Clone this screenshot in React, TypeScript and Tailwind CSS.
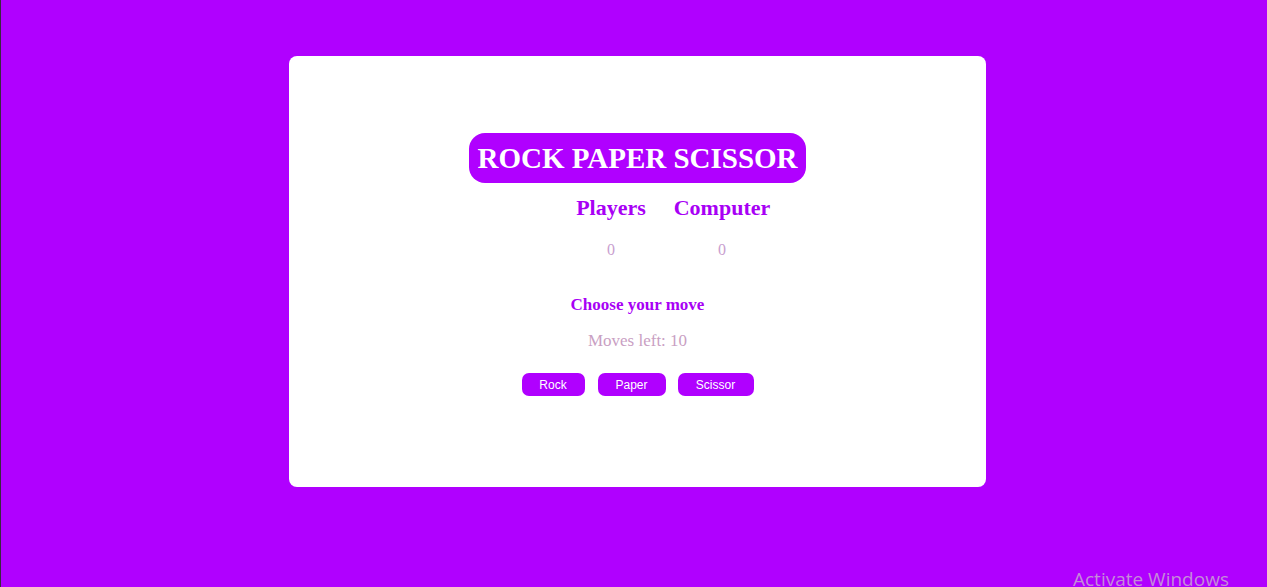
import React from "react";

export default function App() {
  const serif = { fontFamily: '"Liberation Serif", "Times New Roman", serif' };
  return (
    <div className="relative w-[1267px] h-[587px] overflow-hidden bg-[#b000ff] border-l border-[#3a2a40]">
      <div className="ml-[288px] pt-[56px]">
        <div className="w-[697px] h-[431px] bg-white rounded-[8px] flex flex-col items-center" style={serif}>
          <div className="mt-[77px] h-[50px] px-[8px] rounded-[16px] bg-[#b000ff] text-white text-[29px] font-bold leading-[50px] whitespace-nowrap">
            ROCK PAPER SCISSOR
          </div>
          <div className="ml-[58px] mt-[11px] flex gap-[11px]">
            <div className="w-[100px] flex flex-col items-center">
              <div className="text-[22px] font-bold text-[#a800f5] leading-[28px]">Players</div>
              <div className="mt-[18px] text-[16px] text-[#c9a0cf] leading-[20px]">0</div>
            </div>
            <div className="w-[100px] flex flex-col items-center">
              <div className="text-[22px] font-bold text-[#a800f5] leading-[28px] whitespace-nowrap">Computer</div>
              <div className="mt-[18px] text-[16px] text-[#c9a0cf] leading-[20px]">0</div>
            </div>
          </div>
          <div className="mt-[34px] text-[17px] font-bold text-[#a800f5] leading-[22px]">Choose your move</div>
          <div className="mt-[14px] text-[17px] text-[#c9a0c3] leading-[22px]">Moves left: 10</div>
          <div className="mt-[21px] flex" style={{ fontFamily: '"Liberation Sans", Arial, sans-serif' }}>
            <button className="w-[63px] h-[23px] rounded-[7px] bg-[#b000ff] text-white text-[12px]">Rock</button>
            <button className="ml-[13px] w-[68px] h-[23px] rounded-[7px] bg-[#b000ff] text-white text-[12px]">Paper</button>
            <button className="ml-[12px] w-[76px] h-[23px] rounded-[7px] bg-[#b000ff] text-white text-[12px]">Scissor</button>
          </div>
        </div>
      </div>
      <div className="absolute left-[1072px] top-[567px] text-[19px] text-[#c48cd8] leading-[24px]" style={{ fontFamily: '"Open Sans", "Noto Sans", sans-serif' }}>
        Activate Windows
      </div>
    </div>
  );
}
